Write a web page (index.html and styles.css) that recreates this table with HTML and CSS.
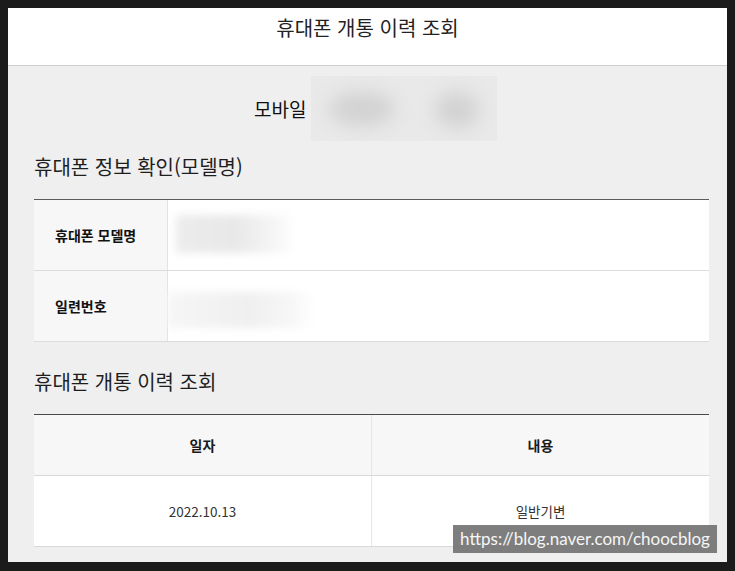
FILE: index.html
```html
<!DOCTYPE html>
<html lang="ko">
<head>
<meta charset="utf-8">
<title>휴대폰 개통 이력 조회</title>
<link rel="stylesheet" href="styles.css">
</head>
<body>
<div class="frame">
  <header class="top">
    <h1 class="title">휴대폰 개통 이력 조회</h1>
  </header>
  <main class="content">
    <div class="mobile">
      <span class="mobile-label">모바일</span>
      <div class="mobile-blur">
        <span class="blob blob-a"></span>
        <span class="blob blob-b"></span>
      </div>
    </div>

    <h2 class="section">휴대폰 정보 확인(모델명)</h2>
    <div class="info">
      <div class="info-row">
        <div class="info-label">휴대폰 모델명</div>
        <div class="info-value"><span class="mask mask-model"></span></div>
      </div>
      <div class="info-row">
        <div class="info-label">일련번호</div>
        <div class="info-value"><span class="mask mask-serial"></span></div>
      </div>
    </div>

    <h2 class="section section-2">휴대폰 개통 이력 조회</h2>
    <div class="history">
      <div class="history-row history-head">
        <div class="cell">일자</div>
        <div class="cell">내용</div>
      </div>
      <div class="history-row history-body">
        <div class="cell">2022.10.13</div>
        <div class="cell">일반기변</div>
      </div>
    </div>
  </main>
  <div class="watermark">https://blog.naver.com/choocblog</div>
</div>
</body>
</html>
```
FILE: styles.css
```css
html, body {
  margin: 0;
  padding: 0;
}
body {
  background: #1b1b1b;
  padding: 8px 8px 9px 8px;
  height: 571px;
  box-sizing: border-box;
  font-family: "Noto Sans CJK KR", "Noto Sans", sans-serif;
  color: #1e1e1e;
}
.frame {
  position: relative;
  height: 554px;
  background: #efefef;
  overflow: hidden;
}
.top {
  height: 58px;
  background: #ffffff;
  border-bottom: 1px solid #cfcfcf;
  box-sizing: border-box;
}
.title {
  margin: 0;
  padding-top: 6px;
  text-align: center;
  font-size: 20px;
  font-weight: 400;
  line-height: 28px;
  color: #222;
}
.content {
  padding: 10px 18px 0 26px;
}
.mobile {
  display: flex;
  align-items: center;
  height: 65px;
  padding-left: 220px;
}
.mobile-label {
  flex: none;
  white-space: nowrap;
  font-size: 19px;
  line-height: 28px;
  width: 57px;
  color: #111;
}
.mobile-blur {
  position: relative;
  flex: none;
  width: 186px;
  height: 65px;
  background: #e9e9e9;
  overflow: hidden;
}
.blob {
  position: absolute;
  border-radius: 50%;
  background: #d2d2d2;
  filter: blur(9px);
}
.blob-a {
  left: 18px;
  top: 16px;
  width: 66px;
  height: 34px;
}
.blob-b {
  left: 124px;
  top: 16px;
  width: 44px;
  height: 36px;
}
.section {
  margin: 12px 0 18px;
  font-size: 20px;
  font-weight: 400;
  line-height: 28px;
  color: #1e1e1e;
}
.section-2 {
  margin-top: 26px;
}
.info {
  border-top: 1px solid #5a5a5a;
}
.info-row {
  display: flex;
  height: 71px;
  border-bottom: 1px solid #dcdcdc;
  box-sizing: border-box;
}
.info-label {
  width: 134px;
  flex: none;
  background: #f7f7f7;
  border-right: 1px solid #e3e3e3;
  display: flex;
  align-items: center;
  padding-left: 21px;
  box-sizing: border-box;
  font-size: 14px;
  font-weight: 700;
  color: #111;
}
.info-value {
  flex: 1;
  background: #ffffff;
  position: relative;
}
.mask {
  position: absolute;
  filter: blur(4px);
}
.mask-model {
  left: 8px;
  top: 15px;
  width: 118px;
  height: 38px;
  background: linear-gradient(90deg, #ececec 0%, #e8e8e8 50%, #f6f6f6 85%, #ffffff 100%);
}
.mask-serial {
  left: 0;
  top: 21px;
  width: 146px;
  height: 36px;
  background: linear-gradient(90deg, #f6f6f6 0%, #efefef 55%, #f7f7f7 85%, #ffffff 100%);
}
.history {
  border-top: 1px solid #4a4a4a;
}
.history-row {
  display: grid;
  grid-template-columns: 338px 1fr;
  border-bottom: 1px solid #d8d8d8;
  box-sizing: border-box;
}
.history-head {
  height: 61px;
  background: #f7f7f7;
  font-weight: 700;
}
.history-body {
  height: 71px;
  background: #ffffff;
}
.cell {
  display: flex;
  align-items: center;
  justify-content: center;
  font-size: 14px;
  color: #1a1a1a;
}
.cell:first-child {
  border-right: 1px solid #e6e6e6;
}
.history-body .cell {
  font-size: 13.5px;
  color: #333;
}
.watermark {
  position: absolute;
  right: 10px;
  bottom: 9px;
  width: 264px;
  height: 28px;
  background: rgba(115, 115, 115, 0.92);
  color: #f6f6f6;
  font-family: Lato, "Noto Sans", sans-serif;
  font-size: 17px;
  line-height: 28px;
  text-align: center;
}
```
